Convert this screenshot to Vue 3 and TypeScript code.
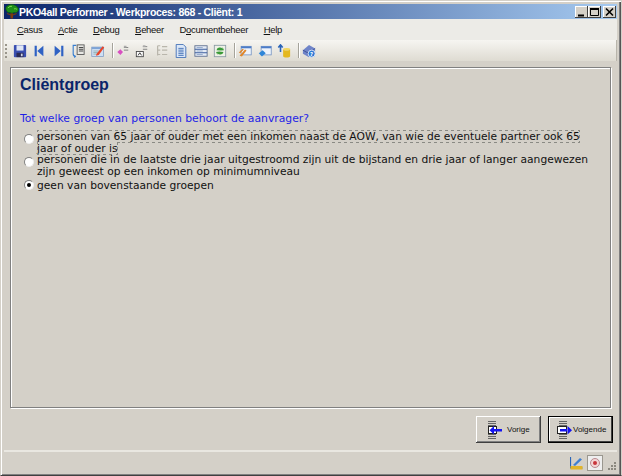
<script setup lang="ts">
const menus: { key: string; rest: string; pre?: string }[] = [
  { key: 'C', rest: 'asus' },
  { key: 'A', rest: 'ctie' },
  { key: 'D', rest: 'ebug' },
  { key: 'B', rest: 'eheer' },
  { pre: 'D', key: 'o', rest: 'cumentbeheer' },
  { key: 'H', rest: 'elp' },
]
</script>

<template>
  <div class="window">
    <header class="titlebar">
      <svg class="logo" width="14" height="15" viewBox="0 0 14 15">
        <path d="M5.500 8h2.500v6.500H5.500z" fill="#7a3c10" />
        <path d="M2 9.500 6 11M11.500 9.500 8 11" stroke="#7a3c10" stroke-width="1.200" />
        <path d="M1 5.500C0 3 3 .5 6.500 .5S14 3 13.500 6c-.5 2.500-3 3-4.500 2.500-1 .8-3 .8-4 0C3.500 9 1.500 8 1 5.500z" fill="#1f8f1a" stroke="#0d4d10" stroke-width=".6" />
        <path d="M3 4c1-1.500 3-2 4-1.500M9 5c1-.5 2-.5 3 .5" stroke="#7fdc4a" fill="none" />
      </svg>
      <span class="title">PKO4all Performer - Werkproces: 868 - Cliënt: 1</span>
      <div class="caption-btns">
        <button class="cap"><svg width="13" height="12" viewBox="0 0 13 12"><rect x="3" y="8.500" width="6" height="2" fill="#000" /></svg></button>
        <button class="cap"><svg width="13" height="12" viewBox="0 0 13 12"><path d="M2.500 2.500h8v7h-8z" fill="none" stroke="#000" /><rect x="2" y="2" width="9" height="2" fill="#000" /></svg></button>
        <button class="cap close"><svg width="13" height="12" viewBox="0 0 13 12"><path d="M3 2.500 10 9.500M10 2.500 3 9.500" stroke="#000" stroke-width="1.600" /></svg></button>
      </div>
    </header>

    <nav class="menubar">
      <span v-for="m in menus" :key="m.key + m.rest" class="menu">{{ m.pre }}<u>{{ m.key }}</u>{{ m.rest }}</span>
    </nav>

    <div class="toolbar">
      <span class="grip"></span>
      <svg class="ti" viewBox="0 0 16 16"><rect x="1" y="1" width="14" height="14" rx="1" fill="#3a4fb0" /><rect x="4" y="1.500" width="8" height="6" fill="#dfe6f5" /><rect x="4" y="10" width="8" height="5" fill="#2b2b55" /><rect x="9" y="11" width="2" height="3" fill="#cfd6ea" /></svg>
      <svg class="ti" viewBox="0 0 16 16"><rect x="3" y="2" width="2.500" height="12" fill="#2f62c4" /><path d="M13 2v12L6 8z" fill="#2f62c4" /></svg>
      <svg class="ti" viewBox="0 0 16 16"><rect x="10.500" y="2" width="2.500" height="12" fill="#2f62c4" /><path d="M3 2v12l7-6z" fill="#2f62c4" /></svg>
      <svg class="ti" viewBox="0 0 16 16"><path d="M6 1.500H2.500V11c0 2 1.500 3 3 3" fill="none" stroke="#3a7fd0" stroke-width="1.300" /><path d="M3.500 12.500 6 14.500 3.500 16z" fill="#3a7fd0" /><rect x="7" y="1" width="8" height="11" fill="#e8e8e4" stroke="#555" /><path d="M9 4h5M9 6h5M9 8h5" stroke="#333" /></svg>
      <svg class="ti" viewBox="0 0 18 16"><rect x="1" y="3" width="15" height="12" fill="#cfe0f4" stroke="#7f9dc4" /><rect x="1" y="3" width="15" height="2.500" fill="#7fa4d6" /><path d="M3 8h7M3 10h6M3 12h7" stroke="#8aa" /><path d="M7 12 15 2l2 1.500-7 9.500-3.500 1z" fill="#e8462a" /></svg>
      <span class="sep"></span>
      <svg class="ti" viewBox="0 0 16 16"><path d="M9 4h5M9 7h5" stroke="#777" /><rect x="9" y="2" width="3" height="2" fill="#aaa" /><path d="M5 6l3 3-3 3.500-3.500-3.500z" fill="#d84fc0" /></svg>
      <svg class="ti" viewBox="0 0 16 16"><path d="M9 3h5M9 6h5" stroke="#777" /><rect x="9" y="1.500" width="3" height="2" fill="#aaa" /><rect x="1.500" y="8.500" width="8" height="6" fill="#fff" stroke="#444" /><path d="M3.500 13 5.500 10l2 3" fill="none" stroke="#222" /></svg>
      <svg class="ti" viewBox="0 0 16 16"><path d="M3 2h3M3 2v11M3 7h3M3 12h3M8 3h6M8 7h6M8 12h6" stroke="#b9b6ac" stroke-width="1.400" /></svg>
      <svg class="ti" viewBox="0 0 16 16"><path d="M2.500 .5h8l3 3v12h-11z" fill="#dbe7f7" stroke="#3d6cb4" /><path d="M5 5h6M5 7h6M5 9h6M5 11h6M5 13h6" stroke="#3d6cb4" /></svg>
      <svg class="ti" viewBox="0 0 16 16"><rect x="1" y="2" width="14" height="12" fill="#e5ebf5" stroke="#5d6f8f" /><path d="M1 6h14M1 10h14" stroke="#3d5f9f" stroke-width="1.400" /><path d="M3 4h7M3 8h7M3 12h7" stroke="#8fa6c9" /></svg>
      <svg class="ti" viewBox="0 0 16 16"><rect x="1.500" y="1.500" width="13" height="13" fill="#eef1e6" stroke="#8a9aa4" /><path d="M4 7a4 4 0 0 1 7-1.500V3.500l1.500 3.500-3.500.500" fill="#3a9a38" /><path d="M12 9a4 4 0 0 1-7 1.500v2L3.500 9 7 8.500" fill="#3a9a38" /></svg>
      <span class="sep"></span>
      <svg class="ti" viewBox="0 0 18 16"><rect x="4" y="2" width="13" height="11" fill="#eef3fb" stroke="#6f8fc0" /><rect x="4" y="2" width="13" height="2.500" fill="#4c7cc8" /><path d="M2 14 9 6l2 1.500L5 15zM1 10l5-5 1.500 1L3 11z" fill="#e0872a" /></svg>
      <svg class="ti" viewBox="0 0 18 16"><rect x="4" y="2" width="13" height="11" fill="#eef3fb" stroke="#6f8fc0" /><rect x="4" y="2" width="13" height="2.500" fill="#4c7cc8" /><path d="M1 11l5-4 4 4-5 4z" fill="#2f86d8" /></svg>
      <svg class="ti" viewBox="0 0 16 16"><ellipse cx="11" cy="6" rx="4" ry="1.500" fill="#f4d860" /><path d="M7 6v8c0 2 8 2 8 0V6c0 2-8 2-8 0z" fill="#e4b820" /><path d="M4 9V2M1.500 4 4 1l2.500 3" fill="none" stroke="#2a64b8" stroke-width="1.800" /></svg>
      <span class="sep"></span>
      <svg class="ti" viewBox="0 0 16 16"><path d="M1 7 8 1l7 4v5l-7 5-7-4z" fill="#6f84c8" /><path d="M1 7l7 4 7-6" fill="none" stroke="#3d4f90" /><circle cx="11" cy="11" r="4" fill="#2c78d4" stroke="#dfe9f8" /><text x="11" y="13.500" class="q">?</text></svg>
    </div>

    <main class="content">
      <section class="panel">
        <h1 class="heading">Cliëntgroep</h1>
        <p class="question">Tot welke groep van personen behoort de aanvrager?</p>
        <div class="options">
          <label class="option">
            <span class="radio"></span>
            <span class="option-text"><span class="focus">personen van 65 jaar of ouder met een inkomen naast de AOW, van wie de eventuele partner ook 65 jaar of ouder is</span></span>
          </label>
          <label class="option">
            <span class="radio"></span>
            <span class="option-text">personen die in de laatste drie jaar uitgestroomd zijn uit de bijstand en drie jaar of langer aangewezen zijn geweest op een inkomen op minimumniveau</span>
          </label>
          <label class="option single">
            <span class="radio checked"></span>
            <span class="option-text">geen van bovenstaande groepen</span>
          </label>
        </div>
      </section>
    </main>

    <footer class="actions">
      <button class="btn">
        <svg width="16" height="18" viewBox="0 0 16 18"><path d="M1 .5h8M1 2.500h8M1 4.500h8M1 13.500h8M1 15.500h8M1 17.500h8" stroke="#666" /><rect x="1.500" y="5.500" width="8" height="7" fill="#fff" stroke="#222" /><path d="M6 8h9v2.500H6zM2.500 9.200 7 5v8.500z" fill="#1414f0" /></svg>
        <span>Vorige</span>
      </button>
      <button class="btn default">
        <svg width="16" height="18" viewBox="0 0 16 18"><path d="M2 .5h8M2 2.500h8M2 4.500h8M2 13.500h8M2 15.500h8M2 17.500h8" stroke="#666" /><rect x=".5" y="5.500" width="9" height="7" fill="#fff" stroke="#222" /><path d="M3 8h8v2.500H3zM15 9.200 10.500 5v8.500z" fill="#1414f0" /></svg>
        <span>Volgende</span>
      </button>
    </footer>

    <div class="statusbar">
      <svg width="13" height="14" viewBox="0 0 13 14"><path d="M.5 1v11h12" fill="none" stroke="#2a64b8" stroke-width="1.200" /><rect x=".5" y="10" width="12" height="3.500" fill="#e2b52a" /><path d="M3 9 10 2l2 1.500L5 10z" fill="#3f7fd0" /></svg>
      <span class="status-box">
        <svg width="12" height="12" viewBox="0 0 12 12"><circle cx="6" cy="6" r="4.500" fill="#f3d4d4" stroke="#b98a90" /><circle cx="6" cy="6" r="2" fill="#c8343a" /></svg>
      </span>
      <svg class="gripper" width="10" height="10" viewBox="0 0 10 10" fill="#8b887f"><rect x="7" y="0" width="2" height="2" /><rect x="4" y="3" width="2" height="2" /><rect x="7" y="3" width="2" height="2" /><rect x="1" y="6" width="2" height="2" /><rect x="4" y="6" width="2" height="2" /><rect x="7" y="6" width="2" height="2" /></svg>
    </div>
  </div>
</template>

<style scoped>
.window {
  box-sizing: border-box;
  width: 622px;
  height: 476px;
  display: flex;
  flex-direction: column;
  padding: 3px 3px 1px 3px;
  background: #d4d0c8;
  border: 1px solid #d4d0c8;
  border-bottom-color: #404040;
  box-shadow: inset 1px 1px 0 #fff, inset -1px 0 0 #555, inset -2px -1px 0 #808080;
  font-family: "DejaVu Sans", sans-serif;
  overflow: hidden;
}
.titlebar {
  flex: none;
  height: 15px;
  display: flex;
  align-items: center;
  margin-right: 1px;
  padding: 0 1px 0 1px;
  background: linear-gradient(90deg, #0a246a, #a6caf0);
}
.logo { flex: none; }
.title {
  flex: 1;
  color: #fff;
  font: bold 10.500px "Liberation Sans", sans-serif;
  letter-spacing: -0.3px;
  white-space: nowrap;
}
.caption-btns { display: flex; }
.cap {
  box-sizing: border-box;
  width: 13px;
  height: 12px;
  padding: 0;
  display: block;
  background: #d4d0c8;
  border: 0;
  box-shadow: inset -1px -1px 0 #404040, inset 1px 1px 0 #fff;
}
.cap svg { display: block; }
.close { margin-left: 2px; }
.menubar {
  flex: none;
  height: 21px;
  display: flex;
  align-items: center;
  gap: 15.500px;
  margin-right: 1px;
  padding-left: 13px;
  background: #ecebe7;
  font: 9.500px "Liberation Sans", sans-serif;
  letter-spacing: -0.3px;
  color: #111;
}
.menu { white-space: nowrap; }
.toolbar {
  flex: none;
  height: 21px;
  display: flex;
  align-items: center;
  gap: 5.500px;
  margin-right: 1px;
  padding-left: 1px;
  background: linear-gradient(#f6f5f1, #dedbd2);
  border-right: 1px solid #b8b5ab;
}
.grip {
  width: 2px;
  height: 14px;
  background: repeating-linear-gradient(#9a968c 0 2px, transparent 2px 4px);
}
.ti { width: 14px; height: 14px; flex: none; }
.q { font: bold 6px "DejaVu Sans", sans-serif; fill: #fff; text-anchor: middle; }
.sep {
  width: 1px;
  height: 15px;
  background: #a5a39a;
  box-shadow: 1px 0 0 #fff;
  margin: 0 -2.500px 0 1.500px;
}
.content {
  flex: 1;
  display: flex;
  padding: 6px 7px 8px 6px;
  min-height: 0;
}
.panel {
  flex: 1;
  padding: 8px 14px 0 9px;
  border: 1px solid #808080;
  box-shadow: inset 1px 1px 0 #fff, 1px 1px 0 #fff;
  min-width: 0;
}
.heading {
  margin: 0;
  font: bold 16px/18px "Liberation Sans", sans-serif;
  color: #0a246a;
}
.question {
  margin: 18px 0 0;
  font: 10.800px/14px "DejaVu Sans", sans-serif;
  color: #1f1fe6;
}
.options {
  margin-top: 5px;
  color: #111;
  font: 10.700px/11.500px "DejaVu Sans", sans-serif;
}
.option {
  display: flex;
  align-items: flex-start;
  gap: 3px;
}
.option.single {
  margin-top: 2.500px;
  align-items: center;
}
.option-text { flex: 1; min-width: 0; }
.focus { outline: 1px dotted #8a8a84; outline-offset: -1px; }
.radio {
  box-sizing: border-box;
  flex: none;
  width: 10px;
  height: 10px;
  margin: 3px 0 0 4px;
  border-radius: 50%;
  background: #fff;
  border: 1px solid #808080;
  border-right-color: #eee;
  border-bottom-color: #eee;
  position: relative;
}
.option.single .radio { margin-top: 0; }
.radio.checked::after {
  content: "";
  position: absolute;
  left: 2px;
  top: 2px;
  width: 4px;
  height: 4px;
  border-radius: 50%;
  background: #000;
}
.actions {
  flex: none;
  height: 34px;
  display: flex;
  justify-content: flex-end;
  align-items: flex-start;
  gap: 7px;
  padding-right: 5px;
  box-sizing: border-box;
}
.btn {
  box-sizing: border-box;
  width: 65px;
  height: 27px;
  padding: 0 0 0 11px;
  display: flex;
  align-items: center;
  gap: 4px;
  background: #d4d0c8;
  border: 0;
  box-shadow: inset -1px -1px 0 #404040, inset 1px 1px 0 #fff, inset -2px -2px 0 #808080;
  font: 8px "Liberation Sans", sans-serif;
  color: #111;
}
.btn.default {
  padding-left: 9px;
  gap: 0;
  box-shadow: inset 0 0 0 1px #000, inset -2px -2px 0 #404040, inset 2px 2px 0 #fff;
}
.statusbar {
  flex: none;
  height: 24px;
  display: flex;
  justify-content: flex-end;
  align-items: center;
  gap: 4px;
  margin-right: 1px;
  border-top: 2px solid #e9e7e1;
  box-sizing: border-box;
}
.status-box {
  box-sizing: border-box;
  width: 16px;
  height: 16px;
  display: flex;
  align-items: center;
  justify-content: center;
  background: #eee;
  border: 1px solid #9a978f;
}
.gripper { margin-top: 8px; }
</style>
